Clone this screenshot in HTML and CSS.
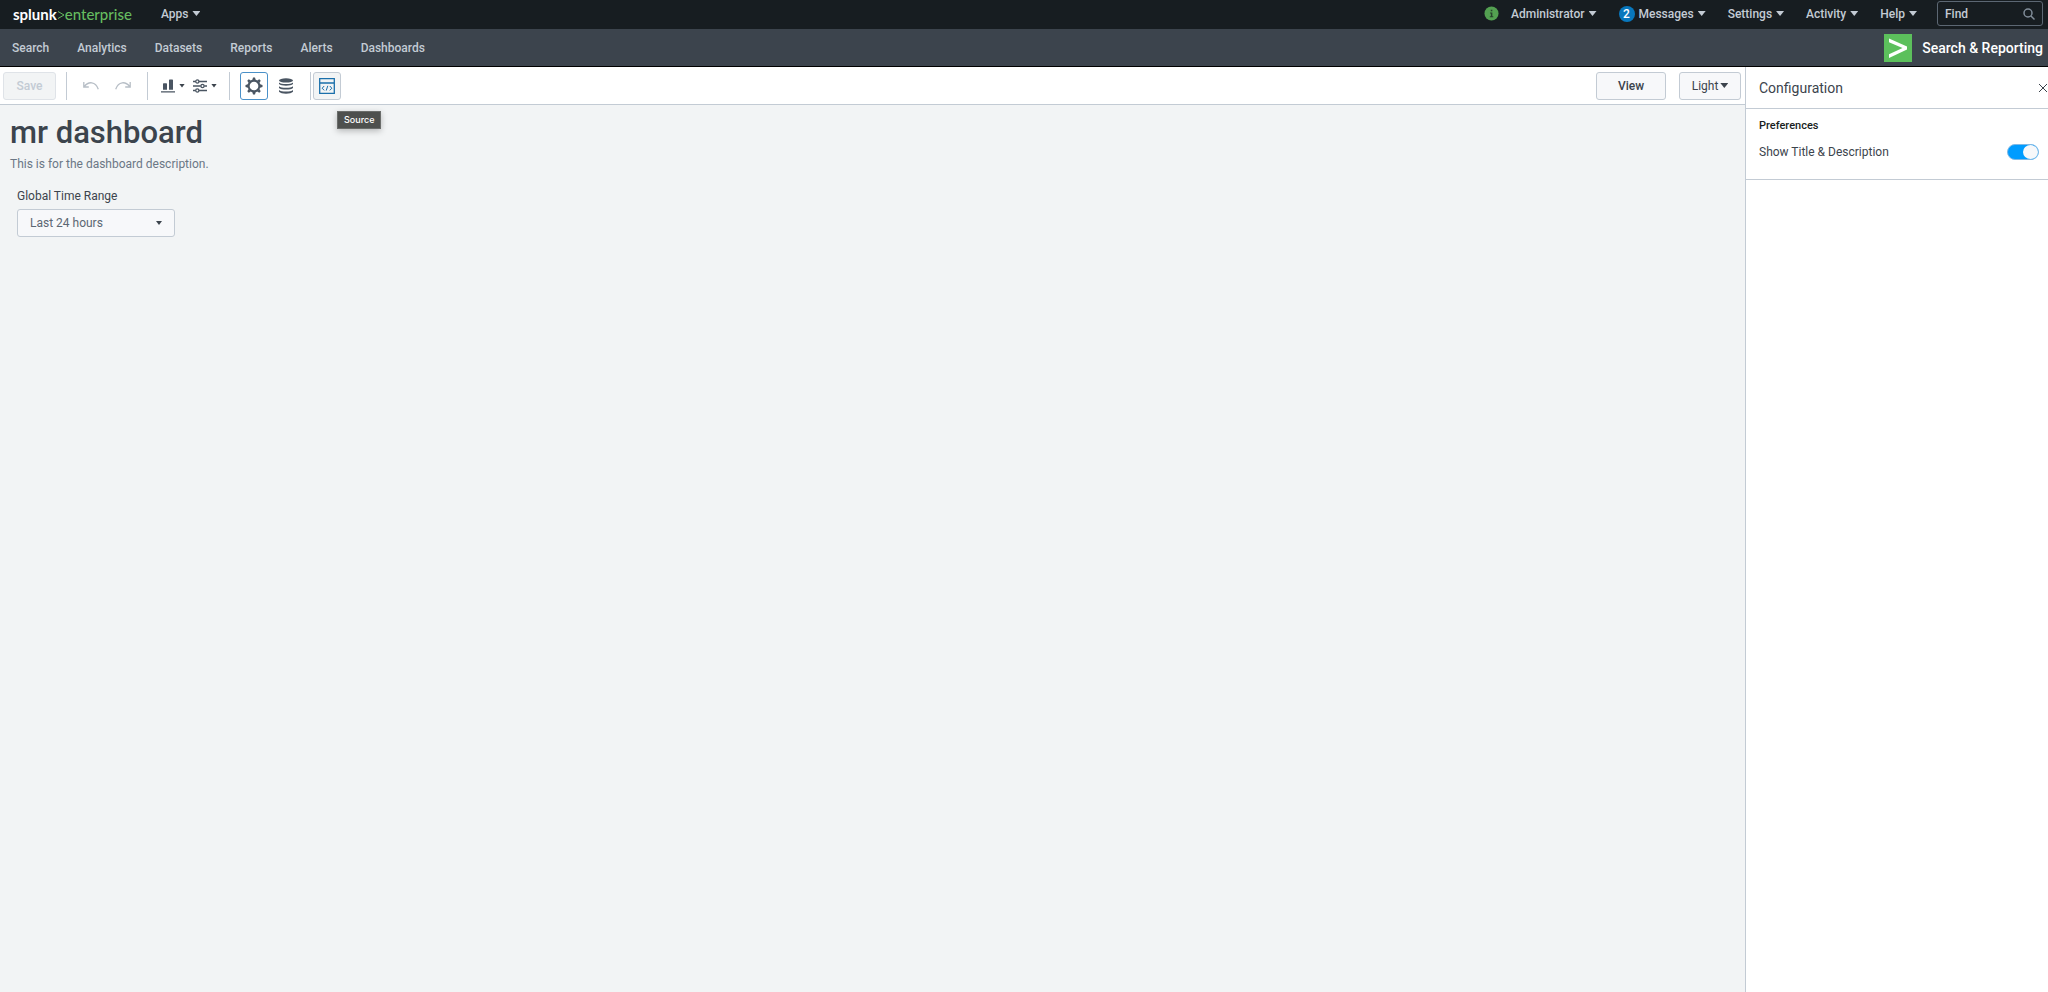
FILE: index.html
```html
<!DOCTYPE html>
<html lang="en">
<head>
    <meta charset="UTF-8">
    <meta name="viewport" content="width=device-width, initial-scale=1.0">
    <title>mr dashboard | Splunk</title>
    <link rel="stylesheet" href="styles.css">
</head>
<body>
    <header class="topbar">
        <a class="logo" href="#"><span class="logo-name">splunk</span><svg class="logo-mark" viewBox="0 0 8 10"><path d="M1 1.500 7 5 1 8.500"/></svg><span class="logo-edition">enterprise</span></a>
        <button class="menu" type="button">Apps<span class="caret"></span></button>
        <div class="topbar-right">
            <div class="user">
                <svg class="info" viewBox="0 0 16 16"><circle cx="8" cy="8" r="7.500" fill="#53a051"/><path d="M7.200 4h1.700v1.600H7.200zM6.400 6.800h2.500v4h1v1.100H6.200v-1.100h1.100V7.900h-.9z" fill="#27422c"/></svg>
                <button class="menu" type="button">Administrator<span class="caret"></span></button>
            </div>
            <button class="menu" type="button"><span class="badge">2</span>Messages<span class="caret"></span></button>
            <button class="menu" type="button">Settings<span class="caret"></span></button>
            <button class="menu" type="button">Activity<span class="caret"></span></button>
            <button class="menu" type="button">Help<span class="caret"></span></button>
            <label class="find">
                <input type="text" placeholder="Find" aria-label="Find">
                <svg viewBox="0 0 12 12"><circle cx="5" cy="5" r="4"/><path d="m8 8 3.500 3.500"/></svg>
            </label>
        </div>
    </header>

    <nav class="appbar">
        <a href="#">Search</a>
        <a href="#">Analytics</a>
        <a href="#">Datasets</a>
        <a href="#">Reports</a>
        <a href="#">Alerts</a>
        <a href="#">Dashboards</a>
        <a class="app-name" href="#">
            <svg viewBox="0 0 28 28"><path d="M0 0h28v28H0z" fill="#5cc05c"/><path d="M5 4.500 23 12.500v3L5 24v-3.800L18.500 14 5 8.300z" fill="#fff"/></svg>
            Search &amp; Reporting
        </a>
    </nav>

    <div class="workspace">
        <main class="editor">
            <div class="toolbar">
                <button class="btn save" type="button" disabled>Save</button>
                <div class="group history">
                    <button class="tool" type="button" aria-label="Undo" disabled>
                        <svg class="icon" viewBox="0 0 16 16"><path d="M.8 4v5h5M1.200 8.600C5.500 3 12.500 3.200 15.300 11.200" fill="none" stroke="#b7bec6" stroke-width="1.300"/></svg>
                    </button>
                    <button class="tool" type="button" aria-label="Redo" disabled>
                        <svg class="icon" viewBox="0 0 16 16"><path d="M15.200 4v5h-5M14.800 8.600C10.500 3 3.500 3.200.7 11.200" fill="none" stroke="#b7bec6" stroke-width="1.300"/></svg>
                    </button>
                </div>
                <div class="group add">
                    <button class="tool" type="button" aria-label="Add chart">
                        <svg class="icon-small" viewBox="0 0 14 14"><path d="M2 5q0-.7.700-.7h2.600q.7 0 .7.700v5.700H2zM8 1.200q0-.7.700-.7h2.600q.7 0 .7.700v9.500H8zM0 12.200h14v1.300H0z" fill="#4a5562"/></svg>
                        <span class="caret-small"></span>
                    </button>
                    <button class="tool" type="button" aria-label="Add input">
                        <svg class="icon-small" viewBox="0 0 14 14"><g fill="none" stroke="#4a5562" stroke-width="1.300"><path d="M0 2.500h2.600M6 2.500h8M0 7h7.800M11.200 7H14M0 11.500h2.600M6 11.500h8"/><circle cx="4.300" cy="2.500" r="1.600"/><circle cx="9.500" cy="7" r="1.600"/><circle cx="4.300" cy="11.500" r="1.600"/></g></svg>
                        <span class="caret-small"></span>
                    </button>
                </div>
                <div class="group sources">
                    <button class="tool square selected" type="button" aria-label="Configuration">
                        <svg class="icon-large" viewBox="-9 -9 18 18"><circle r="5.400" fill="none" stroke="#4a5562" stroke-width="2.100"/><g fill="#4a5562"><path id="tooth" d="M-1.700-6-1-8.500h2L1.700-6z"/><use href="#tooth" transform="rotate(45)"/><use href="#tooth" transform="rotate(90)"/><use href="#tooth" transform="rotate(135)"/><use href="#tooth" transform="rotate(180)"/><use href="#tooth" transform="rotate(225)"/><use href="#tooth" transform="rotate(270)"/><use href="#tooth" transform="rotate(315)"/></g></svg>
                    </button>
                    <button class="tool square" type="button" aria-label="Data sources">
                        <svg class="icon" viewBox="0 0 16 16"><g fill="#4a5562"><ellipse cx="8" cy="2.400" rx="7" ry="2.100"/><path d="M1 4.400c2 2 12 2 14 0v1.700c-2 2.200-12 2.200-14 0zM1 8.200c2 2 12 2 14 0v1.700c-2 2.200-12 2.200-14 0zM1 12c2 2 12 2 14 0v1.800c-2 2.600-12 2.600-14 0z"/></g></svg>
                    </button>
                </div>
                <div class="group source">
                    <button class="tool square hovered" type="button" aria-label="Source" aria-describedby="source-tip">
                        <svg class="icon" viewBox="0 0 16 16"><g fill="none" stroke="#1a6fab"><path stroke-width="1.300" d="M.7.700h14.600v14.600H.7zM.7 5h14.600"/><path d="M5.200 8 3.200 10.200l2 2.200M10.800 8l2 2.200-2 2.200M8.800 7.800l-1.600 4.800"/></g></svg>
                    </button>
                    <span class="tooltip" id="source-tip" role="tooltip">Source</span>
                </div>
                <div class="actions">
                    <button class="btn view" type="button">View</button>
                    <button class="btn theme" type="button">Light<span class="caret"></span></button>
                </div>
            </div>
            <section class="canvas">
                <h1>mr dashboard</h1>
                <p class="description">This is for the dashboard description.</p>
                <div class="time-input">
                    <label for="time-range">Global Time Range</label>
                    <div class="select">
                        <select id="time-range">
                            <option>Last 24 hours</option>
                        </select>
                        <span class="caret-small"></span>
                    </div>
                </div>
            </section>
        </main>

        <aside class="config">
            <div class="config-header">
                <h2>Configuration</h2>
                <button class="close" type="button" aria-label="Close"><svg viewBox="0 0 10 10"><path d="m1 1 8 8M9 1 1 9"/></svg></button>
            </div>
            <div class="config-section">
                <h3>Preferences</h3>
                <div class="config-row">
                    <label for="show-title">Show Title &amp; Description</label>
                    <input class="switch" type="checkbox" id="show-title" checked>
                </div>
            </div>
        </aside>
    </div>
</body>
</html>
```
FILE: styles.css
```css
* {
    box-sizing: border-box;
}
body {
    margin: 0;
    min-height: 100vh;
    display: flex;
    flex-direction: column;
    font-family: Roboto, "Liberation Sans", sans-serif;
    font-size: 12px;
    line-height: 16px;
    color: #3c444d;
    background-color: #fff;
}
button, input, select {
    font: inherit;
    color: inherit;
}
button {
    padding: 0;
    border: 0;
    background: none;
    cursor: pointer;
}
a {
    color: inherit;
    text-decoration: none;
}
svg {
    display: block;
    flex: none;
}
h1, h2, h3, p {
    margin: 0;
}

/* carets */
.caret, .caret-small {
    flex: none;
    width: 8px;
    height: 5px;
    background-color: currentColor;
    clip-path: polygon(0 0, 100% 0, 50% 100%);
}
.caret-small {
    width: 6px;
    height: 4px;
}

/* top bar */
.topbar {
    display: flex;
    align-items: center;
    height: 29px;
    padding: 0 5px 2px 13px;
    background-color: #171d21;
    color: #c3cbd4;
    font-weight: 500;
}
.logo {
    display: flex;
    align-items: center;
    margin-right: 29px;
    font-family: Lato, sans-serif;
    font-size: 15px;
    color: #65bb5f;
}
.logo-name {
    font-weight: 700;
    color: #fff;
}
.logo-mark {
    width: 8px;
    height: 10px;
    margin-top: 2px;
    fill: none;
    stroke: #65bb5f;
}
.menu {
    display: flex;
    align-items: center;
    gap: 4px;
}
.topbar-right {
    display: flex;
    align-items: center;
    gap: 22px;
    margin-left: auto;
}
.user {
    display: flex;
    align-items: center;
    gap: 12px;
}
.info {
    width: 15px;
    height: 15px;
}
.badge {
    width: 16px;
    height: 16px;
    border-radius: 50%;
    background-color: #0877bd;
    color: #fff;
    font-size: 12px;
    text-align: center;
}
.find {
    display: flex;
    align-items: center;
    width: 106px;
    height: 25px;
    margin-left: -2px;
    padding: 0 7px;
    border: 1px solid #5c6773;
    border-radius: 3px;
}
.find input {
    flex: 1;
    min-width: 0;
    padding: 0;
    border: 0;
    outline: 0;
    background: none;
}
.find input::placeholder {
    color: #c3cbd4;
    opacity: 1;
}
.find svg {
    width: 12px;
    height: 12px;
    fill: none;
    stroke: #818d99;
    stroke-width: 1.5;
}

/* app bar */
.appbar {
    display: flex;
    align-items: center;
    gap: 28px;
    height: 38px;
    padding: 0 5px 0 12px;
    border-bottom: 1px solid #000;
    background-color: #3c444d;
    color: #c3cbd4;
    font-weight: 500;
}
.app-name {
    display: flex;
    align-items: center;
    gap: 10px;
    margin-left: auto;
    color: #fff;
    font-size: 14px;
}
.app-name svg {
    width: 28px;
    height: 28px;
}

/* editor */
.workspace {
    flex: 1;
    display: flex;
}
.editor {
    flex: 1;
    min-width: 0;
    display: flex;
    flex-direction: column;
}
.toolbar {
    display: flex;
    align-items: center;
    height: 38px;
    padding: 0 4px 0 3px;
    border-bottom: 1px solid #c3cbd4;
}
.btn {
    height: 28px;
    border: 1px solid #c3cbd4;
    border-radius: 3px;
    background-color: #f7f8fa;
}
.save {
    width: 53px;
    margin-right: 10px;
    border-color: #dfe3e8;
    background-color: #f2f4f5;
    color: #c3cbd4;
    font-weight: 500;
}
.group {
    display: flex;
    align-items: center;
    height: 28px;
    border-left: 1px solid #c3cbd4;
}
.tool {
    display: flex;
    align-items: center;
    gap: 4px;
}
.history {
    gap: 16px;
    padding: 0 16px;
}
.add {
    gap: 8px;
    padding: 0 12px 0 13px;
}
.sources {
    gap: 4px;
    padding: 0 10px;
}
.source {
    position: relative;
    padding-left: 2px;
}
.icon {
    width: 16px;
    height: 16px;
}
.icon-small {
    width: 14px;
    height: 14px;
}
.icon-large {
    width: 18px;
    height: 18px;
}
.square {
    justify-content: center;
    width: 28px;
    height: 28px;
    border: 1px solid transparent;
    border-radius: 3px;
}
.selected {
    border-color: #4a90c8;
}
.hovered {
    border-color: #c3cbd4;
    background-color: #f2f4f5;
}
.tooltip {
    position: absolute;
    top: 39px;
    left: 26px;
    z-index: 1;
    padding: 0 6px;
    border: 1px solid #6b6d6b;
    background-color: #4e504e;
    box-shadow: 0 2px 6px rgba(0, 0, 0, 0.25);
    color: #fff;
    font-family: Inter, sans-serif;
    font-size: 9px;
    font-weight: 500;
}
.actions {
    display: flex;
    gap: 13px;
    margin-left: auto;
}
.view {
    width: 70px;
    font-weight: 500;
}
.theme {
    display: flex;
    align-items: center;
    justify-content: center;
    gap: 2px;
    width: 62px;
}
.canvas {
    flex: 1;
    padding: 12px 10px;
    background-color: #f2f4f5;
}
.canvas h1 {
    font-size: 31px;
    line-height: 32px;
    font-weight: 500;
}
.description {
    margin-top: 7px;
    color: #6b7785;
}
.time-input {
    width: 158px;
    margin: 16px 0 0 7px;
}
.select {
    position: relative;
    margin-top: 5px;
}
.select select {
    display: block;
    width: 100%;
    height: 28px;
    padding: 0 12px;
    border: 1px solid #c3cbd4;
    border-radius: 3px;
    background-color: #f7f8fa;
    color: #5c6773;
    appearance: none;
}
.select .caret-small {
    position: absolute;
    top: 12px;
    right: 13px;
    pointer-events: none;
}

/* configuration panel */
.config {
    width: 303px;
    border-left: 1px solid #c3cbd4;
}
.config-header {
    display: flex;
    align-items: center;
    justify-content: space-between;
    height: 42px;
    padding-left: 13px;
    border-bottom: 1px solid #c3cbd4;
}
.config-header h2 {
    font-size: 14px;
    font-weight: 400;
}
.close svg {
    width: 10px;
    height: 10px;
    stroke: #3c444d;
}
.config-section {
    padding: 9px 9px 19px 13px;
    border-bottom: 1px solid #c3cbd4;
}
.config-section h3 {
    font-size: 11px;
    font-weight: 500;
    color: #171d21;
}
.config-row {
    display: flex;
    align-items: center;
    justify-content: space-between;
    margin-top: 10px;
}
.switch {
    display: flex;
    justify-content: flex-end;
    width: 32px;
    height: 16px;
    margin: 0;
    border: 1px solid #c3cbd4;
    border-radius: 8px;
    background-color: #c3cbd4;
    appearance: none;
}
.switch:not(:checked) {
    justify-content: flex-start;
}
.switch::before {
    content: "";
    width: 15px;
    height: 14px;
    border-radius: 50%;
    background-color: #f7f8fa;
}
.switch:checked {
    border-color: #7fb9e6;
    background-color: #009cff;
}
```
